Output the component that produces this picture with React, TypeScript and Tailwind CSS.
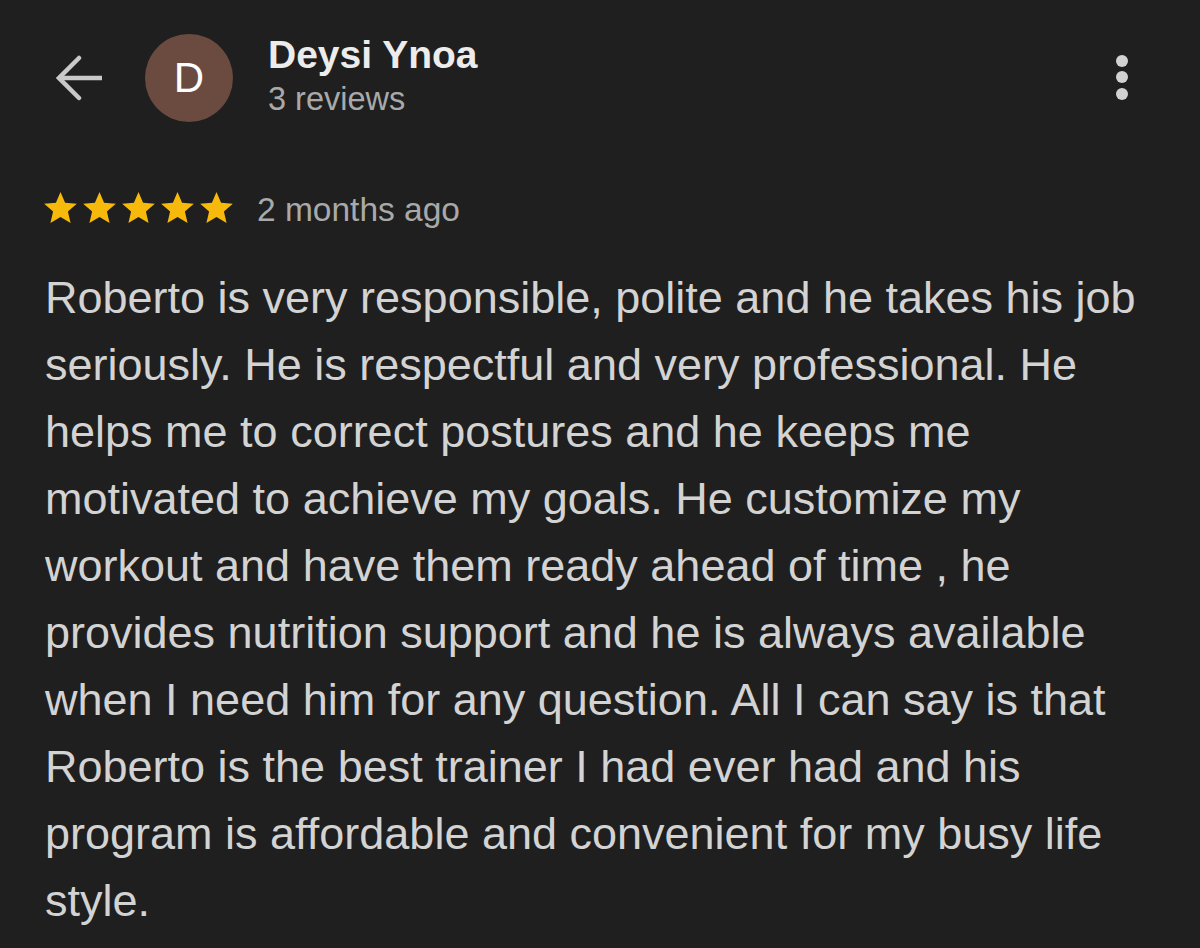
import React from 'react';

const reviewText =
  'Roberto is very responsible, polite and he takes his job seriously. He is respectful and very professional. He helps me to correct postures and he keeps me motivated to achieve my goals. He customize my workout and have them ready ahead of time , he provides nutrition support and he is always available when I need him for any question. All I can say is that Roberto is the best trainer I had ever had and his program is affordable and convenient for my busy life style.';

function Star() {
  return (
    <svg viewBox="2 2 20 19" className="w-[33px] h-[31px]" fill="#f6b90c">
      <path d="M12 17.27L18.18 21l-1.64-7.03L22 9.24l-7.19-.61L12 2 9.19 8.63 2 9.24l5.46 4.73L5.82 21z" />
    </svg>
  );
}

export default function App() {
  return (
    <div className="min-h-screen w-full bg-[#1f1f1f] pt-[34px] font-['Liberation_Sans',_Arial,_sans-serif]">
      {/* Header */}
      <div className="flex items-center h-[88px] pl-[56px] pr-[72px]">
        <svg viewBox="0 0 46 46" className="w-[46px] h-[46px] shrink-0" fill="none" stroke="#c9c9c9" strokeWidth="4.5" strokeLinecap="square">
          <path d="M44 23H5" />
          <path d="M23 3L3 23l20 20" strokeLinecap="round" />
        </svg>
        <div className="ml-[43px] w-[88px] h-[88px] rounded-full bg-[#6b4a3f] flex items-center justify-center text-white text-[42px] leading-none shrink-0">
          D
        </div>
        <div className="ml-[35px] flex-1 -mt-[4px]">
          <div className="text-[39px] leading-[44px] font-bold text-[#ececec]">Deysi Ynoa</div>
          <div className="mt-[2px] text-[32.5px] leading-[40px] text-[#a9a9a9]">3 reviews</div>
        </div>
        <div className="flex flex-col gap-[4.5px] -mt-[2px]">
          <span className="block w-[12px] h-[12px] rounded-full bg-[#d2d2d2]" />
          <span className="block w-[12px] h-[12px] rounded-full bg-[#d2d2d2]" />
          <span className="block w-[12px] h-[12px] rounded-full bg-[#d2d2d2]" />
        </div>
      </div>

      {/* Rating */}
      <div className="mt-[69px] pl-[44px] flex items-start">
        <div className="flex gap-[6px] pt-[1px]">
          <Star />
          <Star />
          <Star />
          <Star />
          <Star />
        </div>
        <span className="ml-[24px] mt-[0px] text-[33.5px] leading-[38px] text-[#a9a9a9]">2 months ago</span>
      </div>

      {/* Review body */}
      <p className="mt-[35px] pl-[45px] w-[1160px] text-[45px] leading-[67px] text-[#d3d3d3]">
        {reviewText}
      </p>
    </div>
  );
}
